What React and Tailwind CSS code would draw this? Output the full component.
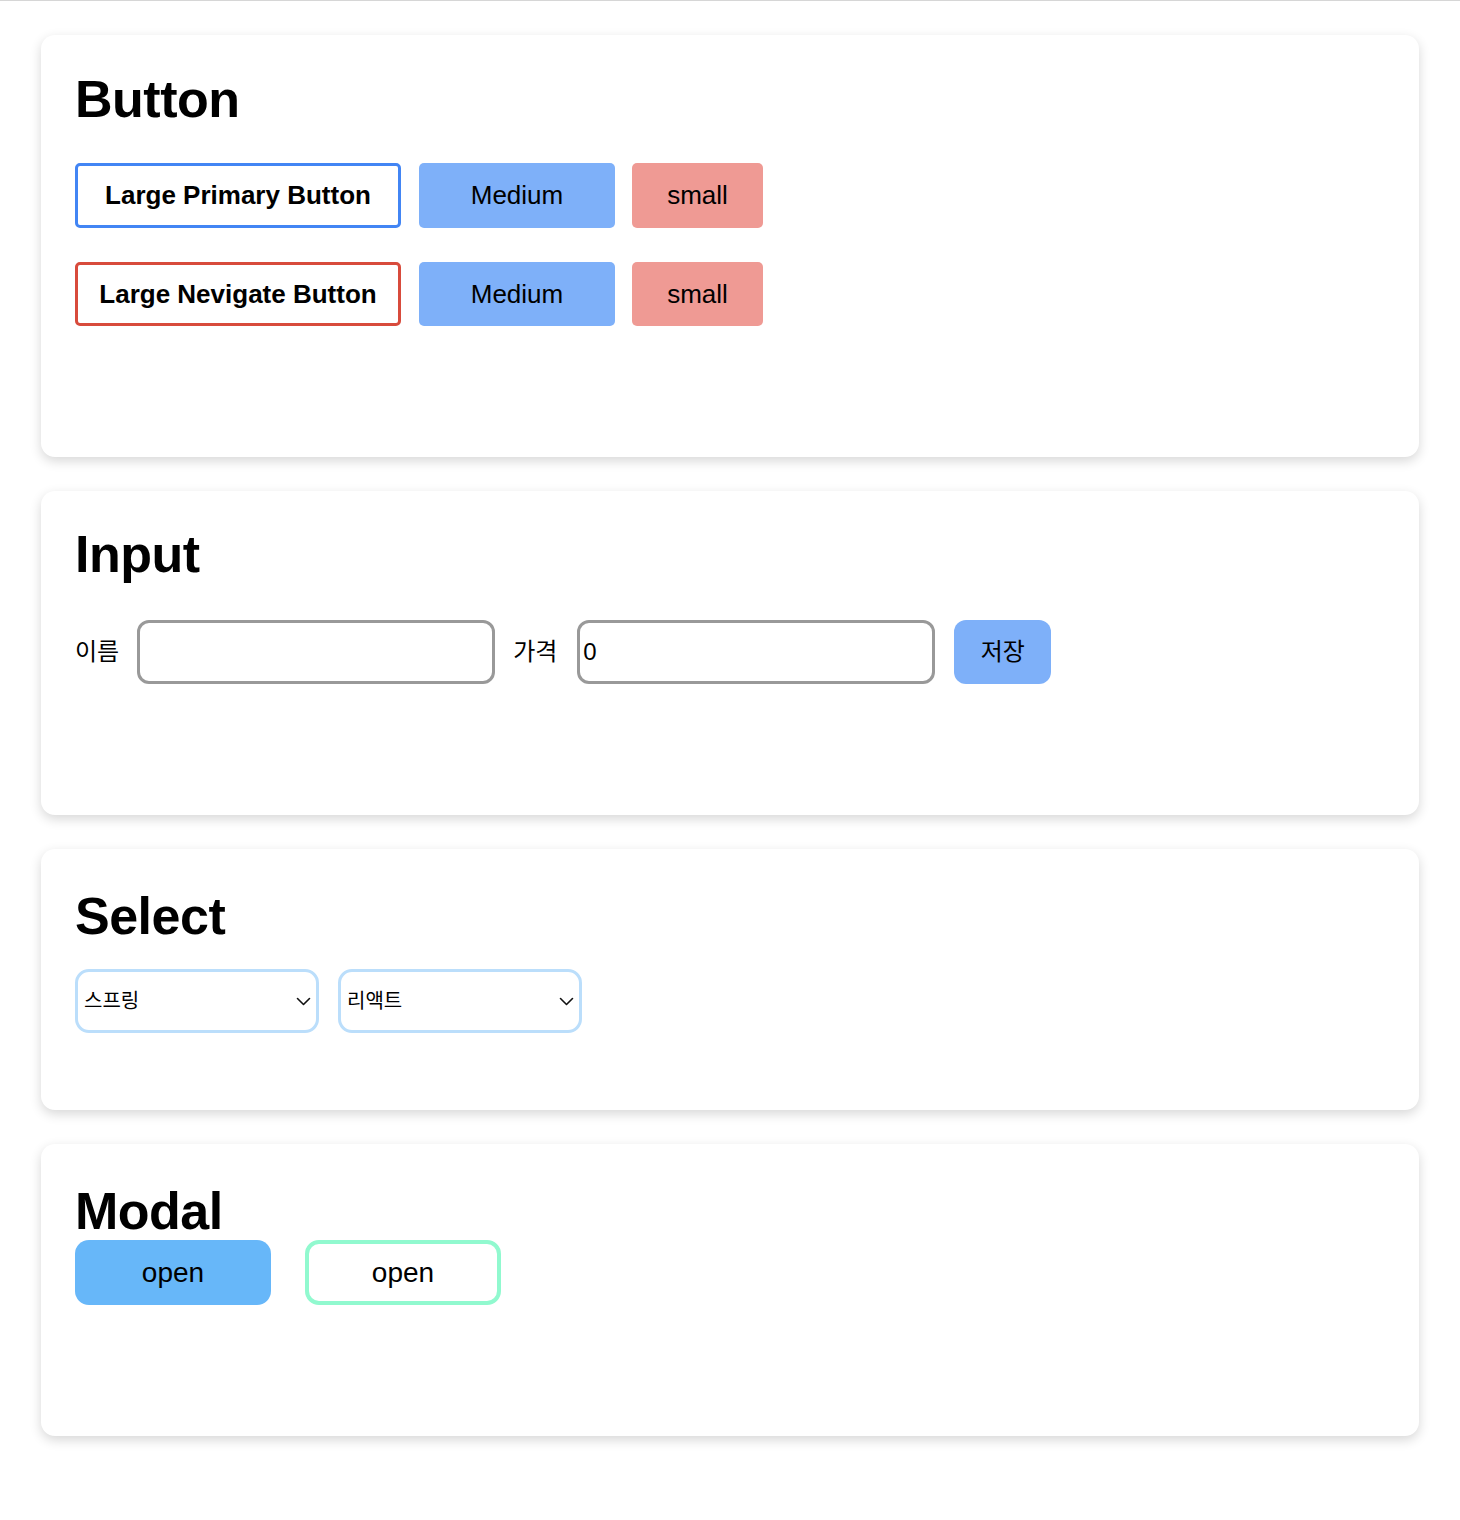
import React from 'react';

const sans = "font-['Liberation_Sans','Noto_Sans_CJK_KR',sans-serif]";

// Card wrapper shared by every section
const Section = ({ title, pt, mb, pb, children }) => (
  <section className={`rounded-[14px] bg-white px-[34px] shadow-[0_4px_12px_rgba(0,0,0,0.16)] ${pt} ${pb}`}>
    <h1 className={`text-[52px] font-bold leading-none tracking-[-0.5px] text-black ${mb}`}>{title}</h1>
    {children}
  </section>
);

const Chevron = () => (
  <svg width="15" height="9" viewBox="0 0 15 9" fill="none">
    <path d="M1.5 1.5 L7.5 7.5 L13.5 1.5" stroke="#111" strokeWidth="1.6" strokeLinecap="round" strokeLinejoin="round" />
  </svg>
);

const FakeSelect = ({ label }) => (
  <div className="flex h-[64px] w-[244px] items-center justify-between rounded-[14px] border-[3px] border-[#bbdefb] bg-white pl-[6px] pr-[5px]">
    <span className="text-[20px] text-black">{label}</span>
    <Chevron />
  </div>
);

const App = () => {
  return (
    <div className={`min-h-[1520px] border-t border-[#d6d6d6] bg-white px-[41px] pt-[34px] ${sans}`}>
      <div className="flex flex-col gap-[34px]">
        {/* Button */}
        <Section title="Button" pt="pt-[38px]" mb="mb-[38px]" pb="pb-[131px]">
          <div className="flex flex-col gap-[34px]">
            <div className="flex gap-[18px]">
              <button className="h-[65px] w-[326px] rounded-[5px] border-[3px] border-[#4285f4] bg-white text-[26px] font-bold text-black">
                Large Primary Button
              </button>
              <button className="h-[65px] w-[196px] rounded-[5px] bg-[#7eb0f9] text-[26px] text-black">Medium</button>
              <button className="-ml-px h-[65px] w-[131px] rounded-[5px] bg-[#ef9a94] text-[26px] text-black">small</button>
            </div>
            <div className="flex gap-[18px]">
              <button className="h-[64px] w-[326px] rounded-[5px] border-[3px] border-[#d84b3c] bg-white text-[26px] font-bold text-black">
                Large Nevigate Button
              </button>
              <button className="h-[64px] w-[196px] rounded-[5px] bg-[#7eb0f9] text-[26px] text-black">Medium</button>
              <button className="-ml-px h-[64px] w-[131px] rounded-[5px] bg-[#ef9a94] text-[26px] text-black">small</button>
            </div>
          </div>
        </Section>

        {/* Input */}
        <Section title="Input" pt="pt-[37px]" mb="mb-[40px]" pb="pb-[131px]">
          <div className="flex items-center whitespace-nowrap">
            <span className="text-[24px] text-black">이름</span>
            <input className="ml-[18px] h-[64px] w-[358px] rounded-[12px] border-[3px] border-[#999999] px-[3px] text-[24px] outline-none" />
            <span className="ml-[18px] text-[24px] text-black">가격</span>
            <input defaultValue="0" className="ml-[20px] h-[64px] w-[358px] rounded-[12px] border-[3px] border-[#999999] px-[3px] text-[24px] outline-none" />
            <button className="ml-[19px] h-[64px] w-[97px] rounded-[12px] bg-[#7eb0f9] text-[24px] text-black">저장</button>
          </div>
        </Section>

        {/* Select */}
        <Section title="Select" pt="pt-[41px]" mb="mb-[27px]" pb="pb-[77px]">
          <div className="flex gap-[19px]">
            <FakeSelect label="스프링" />
            <FakeSelect label="리액트" />
          </div>
        </Section>

        {/* Modal */}
        <Section title="Modal" pt="pt-[41px]" mb="mb-[3px]" pb="pb-[131px]">
          <div className="flex gap-[34px]">
            <button className="h-[65px] w-[196px] rounded-[14px] bg-[#67b7f9] text-[28px] text-black">open</button>
            <button className="h-[65px] w-[196px] rounded-[14px] border-[4px] border-[#91f9cf] bg-white text-[28px] text-black">open</button>
          </div>
        </Section>
      </div>
    </div>
  );
};

export default App;
